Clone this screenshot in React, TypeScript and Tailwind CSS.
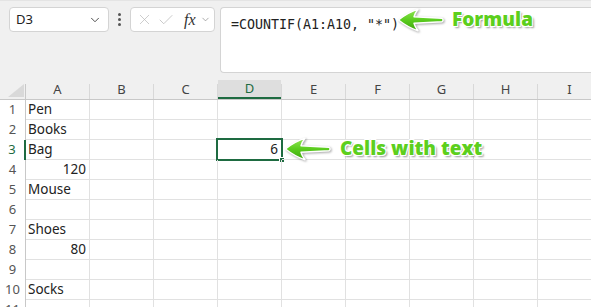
import { ChevronDown, X, Check } from "lucide-react";

// ── Sheet data ────────────────────────────────────────────────────────────────
const COLUMNS = ["A", "B", "C", "D", "E", "F", "G", "H", "I"];

const ROWS: { a?: string; num?: boolean; d?: string }[] = [
  { a: "Pen" },
  { a: "Books" },
  { a: "Bag", d: "6" },
  { a: "120", num: true },
  { a: "Mouse" },
  {},
  { a: "Shoes" },
  { a: "80", num: true },
  {},
  { a: "Socks" },
  {},
];

// ── Annotation arrow (points left) ───────────────────────────────────────────
function Arrow({ id }: { id: string }) {
  return (
    <svg width="48" height="24" viewBox="0 0 48 24" className="drop-shadow-[1px_1.5px_1px_rgba(0,0,0,0.35)]">
      <defs>
        <linearGradient id={id} x1="0" y1="0" x2="0" y2="1">
          <stop offset="0" stopColor="#93e657" />
          <stop offset="0.5" stopColor="#5acc1e" />
          <stop offset="1" stopColor="#3da50e" />
        </linearGradient>
      </defs>
      <path
        d="M1.5,12 Q11,4.5 21,1.2 Q18,5 17,8.8 L45,10.2 Q47.3,12 45,13.8 L17,15.2 Q18,19 21,22.8 Q11,19.5 1.5,12 Z"
        fill={`url(#${id})`}
        stroke="#fff"
        strokeWidth="1.4"
        strokeLinejoin="round"
      />
    </svg>
  );
}

function Label({ children }: { children: string }) {
  return (
    <span className="font-['Open_Sans',sans-serif] font-extrabold text-[19px] leading-[19px] text-[#5ccf1d] whitespace-nowrap [text-shadow:-1px_-1px_0_#fff,1px_-1px_0_#fff,-1px_1px_0_#fff,1px_1px_0_#fff,0_-1px_0_#fff,0_1px_0_#fff,2px_2px_2px_rgba(0,0,0,0.4)]">
      {children}
    </span>
  );
}

// ── Main ─────────────────────────────────────────────────────────────────────
export default function App() {
  return (
    <div className="relative w-[591px] h-[307px] overflow-hidden bg-white font-['Noto_Sans',sans-serif] text-[#222]">
      {/* Formula bar */}
      <div className="h-[80px] bg-[#f0f0f0] border-t border-[#e4e4e4] flex items-start pt-[6px] pl-[9px]">
        <div className="w-[100px] h-[25px] bg-white border border-[#d4d4d4] rounded-[4px] flex items-center justify-between pl-[6px] pr-[6px]">
          <span className="text-[13px]">D3</span>
          <ChevronDown size={14} strokeWidth={1.6} className="text-[#444]" />
        </div>

        <div className="w-[21px] h-[25px] flex flex-col items-center justify-center gap-[2px]">
          <span className="w-[3px] h-[3px] rounded-full bg-[#555]" />
          <span className="w-[3px] h-[3px] rounded-full bg-[#555]" />
          <span className="w-[3px] h-[3px] rounded-full bg-[#555]" />
        </div>

        <div className="w-[85px] h-[25px] bg-white border border-[#d4d4d4] rounded-[4px] flex items-center pl-[5px]">
          <X size={17} strokeWidth={1} className="text-[#b8b8b8]" />
          <Check size={18} strokeWidth={1} className="text-[#b8b8b8] ml-[4px]" />
          <span className="ml-[9px] font-['Liberation_Serif',serif] italic text-[16px] text-[#333] leading-none">fx</span>
          <ChevronDown size={11} strokeWidth={1.5} className="text-[#888] ml-[4px]" />
        </div>

        <div className="ml-[5px] flex-1 h-[66px] bg-white border border-r-0 border-[#d4d4d4] rounded-l-[4px] pl-[10px] pt-[3px]">
          <span className="font-['DejaVu_Sans_Mono',monospace] text-[13.3px] leading-[20px] whitespace-pre text-[#222]">
            =COUNTIF(A1:A10, "*")
          </span>
        </div>
      </div>

      {/* Column header */}
      <div className="flex h-[20px] bg-[#f0f0f0] border-b border-[#c8c8c8]">
        <div className="w-[26px] shrink-0 flex items-end">
          <svg width="25" height="19" viewBox="0 0 25 19" className="shrink-0">
            <polygon points="8,17 24,17 24,4" fill="#d9d9d9" />
          </svg>
          <div className="w-px h-[15px] bg-[#c8c8c8]" />
        </div>
        {COLUMNS.map(col => {
          const active = col === "D";
          return (
            <div key={col} className="w-[64px] shrink-0 flex items-end">
              <div
                className={`flex-1 h-full flex items-center justify-center text-[13px] ${
                  active ? "bg-[#dedede] text-[#1e6b41] border-b-2 border-[#1e6b41]" : "text-[#444]"
                }`}
              >
                {col}
              </div>
              <div className="w-px h-[15px] bg-[#d8d8d8]" />
            </div>
          );
        })}
      </div>

      {/* Rows */}
      {ROWS.map((row, i) => {
        const n = i + 1;
        const active = n === 3;
        return (
          <div key={n} className="flex h-[20px]">
            <div
              className={`w-[26px] shrink-0 flex items-center justify-center text-[13px] ${
                active ? "text-[#1e6b41] border-r-2 border-[#1e6b41]" : "text-[#555] border-r border-[#c8c8c8]"
              }`}
            >
              {n}
            </div>
            {COLUMNS.map(col => {
              const text = col === "A" ? row.a : col === "D" ? row.d : undefined;
              const right = (col === "A" && row.num) || col === "D";
              return (
                <div
                  key={col}
                  className={`relative w-[64px] shrink-0 border-r border-b border-[#e1e1e1] flex items-center text-[13.5px] ${
                    right ? "justify-end pr-[3px]" : "pl-[2px]"
                  }`}
                >
                  {text}
                  {active && col === "D" && (
                    <>
                      <div className="absolute -left-[2px] -top-[2px] w-[67px] h-[23px] border-2 border-[#1e6b41]" />
                      <div className="absolute left-[61px] top-[17px] w-[6px] h-[6px] bg-[#1e6b41] border border-white" />
                    </>
                  )}
                </div>
              );
            })}
          </div>
        );
      })}

      {/* Annotations */}
      <div className="absolute left-[397px] top-[8px] flex items-center">
        <Arrow id="g1" />
      </div>
      <div className="absolute left-[452px] top-[8px]">
        <Label>Formula</Label>
      </div>
      <div className="absolute left-[284px] top-[137px] flex items-center">
        <Arrow id="g2" />
      </div>
      <div className="absolute left-[340px] top-[137px]">
        <Label>Cells with text</Label>
      </div>
    </div>
  );
}
